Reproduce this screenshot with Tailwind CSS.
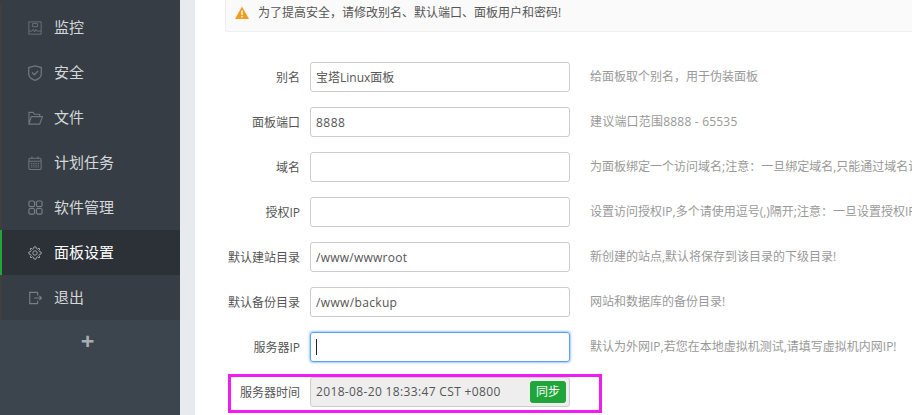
<!DOCTYPE html>
<html lang="zh-CN">

<head>
    <meta charset="UTF-8">
    <script src="https://cdn.jsdelivr.net/npm/@tailwindcss/browser@4"></script>
    <title>面板设置</title>
</head>

<body class="relative h-[415px] w-[912px] overflow-hidden bg-white font-['Open_Sans','Noto_Sans_CJK_SC',sans-serif] text-xs text-[#555]">
    <div class="flex h-[415px]">
        <!-- sidebar -->
        <aside class="w-[180px] shrink-0 bg-[#3c444d]">
            <ul class="bg-[#363d44] pt-[5px] text-[15px] text-[#d5d8da]">
                <li class="flex h-[45px] items-center border-l-2 border-[#3f3f3f] pl-[26px]">
                    <svg class="mr-[12px] h-[14px] w-[14px]" viewBox="0 0 16 16" fill="none" stroke="#70767c">
                        <rect x="1" y="1" width="14" height="14" />
                        <path d="M1 11.500h3.500l1.500-2 1.500 3 1.500-3 1 2H15M5 3h6v3.500H5z" />
                    </svg>
                    <span class="pb-[2px]">监控</span>
                </li>
                <li class="flex h-[45px] items-center border-l-2 border-[#3f3f3f] pl-[26px]">
                    <svg class="mr-[12px] h-[16px] w-[14px]" viewBox="0 0 14 16" fill="none" stroke="#70767c" stroke-width="1.300">
                        <path d="M7 .8 13.300 2.500v6.500c0 3-3 5.200-6.300 6.300C3.700 14.200.7 12 .7 9V2.500z" />
                        <path d="m4 7.500 2.300 2.300L10 6" />
                    </svg>
                    <span class="pb-[2px]">安全</span>
                </li>
                <li class="flex h-[45px] items-center border-l-2 border-[#3f3f3f] pl-[26px]">
                    <svg class="mr-[11px] h-[14px] w-[15px]" viewBox="0 0 16 15" fill="none" stroke="#70767c" stroke-width="1.200">
                        <path d="M1 14V1.500h4.500L7 3.500h5.500v2.500M1 14h11.500L15.500 6H3.500z" />
                    </svg>
                    <span class="pb-[2px]">文件</span>
                </li>
                <li class="flex h-[45px] items-center border-l-2 border-[#3f3f3f] pl-[26px]">
                    <svg class="mr-[12px] h-[14px] w-[14px]" viewBox="0 0 16 16" fill="none" stroke="#70767c" stroke-width="1.200">
                        <rect x="1" y="2.500" width="14" height="13" rx="1.500" />
                        <path d="M1 6h14M4.500 .5v3M11.500 .5v3" />
                        <path d="M3.500 8.500h9M3.500 10.500h9M3.500 12.500h9" stroke-dasharray="1.500 1" />
                    </svg>
                    <span class="pb-[2px]">计划任务</span>
                </li>
                <li class="flex h-[45px] items-center border-l-2 border-[#3f3f3f] pl-[26px]">
                    <svg class="mr-[11px] h-[15px] w-[15px]" viewBox="0 0 16 16" fill="none" stroke="#7a8086" stroke-width="1.200">
                        <rect x="1" y="1" width="6" height="6" rx="1.500" />
                        <rect x="9" y="1" width="6" height="6" rx="1.500" />
                        <rect x="1" y="9" width="6" height="6" rx="1.500" />
                        <rect x="9" y="9" width="6" height="6" rx="1.500" />
                    </svg>
                    <span class="pb-[2px]">软件管理</span>
                </li>
                <li class="flex h-[45px] items-center border-l-2 border-[#20a53a] bg-[#2c3138] pl-[26px] text-white">
                    <svg class="mr-[12px] h-[14px] w-[14px]" viewBox="0 0 16 16" fill="none" stroke="#a0a4a8" stroke-width="1.100">
                        <polygon points="6.800,1 9.200,1 9.600,3 10.900,3.600 12.600,2.400 13.600,3.400 12.400,5.100 13,6.400 15,6.800 15,9.200 13,9.600 12.400,10.900 13.600,12.600 12.600,13.600 10.900,12.400 9.600,13 9.200,15 6.800,15 6.400,13 5.100,12.400 3.400,13.600 2.400,12.600 3.600,10.900 3,9.600 1,9.200 1,6.800 3,6.400 3.600,5.100 2.400,3.400 3.400,2.400 5.100,3.600 6.400,3" />
                        <circle cx="8" cy="8" r="2.500" />
                    </svg>
                    <span class="pb-[2px]">面板设置</span>
                </li>
                <li class="flex h-[45px] items-center border-l-2 border-[#3f3f3f] pl-[26px]">
                    <svg class="mr-[12px] h-[14px] w-[14px]" viewBox="0 0 16 16" fill="none" stroke="#7a8086" stroke-width="1.300">
                        <path d="M11 1.500H2v13h9M11 1.500V5M11 14.500V11M7 8h8.500M13 5.500 15.500 8 13 10.500" />
                    </svg>
                    <span class="pb-[2px]">退出</span>
                </li>
            </ul>
            <div class="flex h-[44px] items-center justify-center pr-[5px] pb-[2px] text-[24px] leading-none font-bold text-[#a8adb2]">+</div>
        </aside>
        <div class="w-[15px] shrink-0 bg-[#e7eaef]"></div>

        <!-- content -->
        <main class="min-w-0 flex-1 overflow-hidden whitespace-nowrap pl-[30px]">
            <div class="flex h-[32px] items-center rounded-bl-[3px] border-b border-l border-[#eeeeee] bg-[#fafafa] pb-[6px] pl-[9px]">
                <svg class="mr-[9px] h-[13px] w-[14px] shrink-0" viewBox="0 0 14 13">
                    <path d="M7 .5 14 13H0z" fill="#f39c1f" />
                    <path d="M6.300 4.500h1.400v4.500H6.300zM6.300 10h1.400v1.500H6.300z" fill="#fff" />
                </svg>
                <span>为了提高安全，请修改别名、默认端口、面板用户和密码!</span>
            </div>

            <form class="pt-[30px]">
                <div class="mb-[15px] flex h-[30px] items-center">
                    <label class="-ml-[25px] w-[100px] shrink-0 pt-[1px] text-right">别名</label>
                    <input type="text" value="宝塔Linux面板" class="ml-[10px] h-[30px] w-[260px] shrink-0 rounded-[3px] border border-[#ccc] px-[5px] text-[#555]">
                    <span class="ml-[20px] text-[#999]">给面板取个别名，用于伪装面板</span>
                </div>
                <div class="mb-[15px] flex h-[30px] items-center">
                    <label class="-ml-[25px] w-[100px] shrink-0 pt-[1px] text-right">面板端口</label>
                    <input type="text" value="8888" class="ml-[10px] h-[30px] w-[260px] shrink-0 rounded-[3px] border border-[#ccc] px-[5px] tracking-[0.5px] text-[#555]">
                    <span class="ml-[20px] tracking-[0.2px] text-[#999]">建议端口范围8888 - 65535</span>
                </div>
                <div class="mb-[15px] flex h-[30px] items-center">
                    <label class="-ml-[25px] w-[100px] shrink-0 pt-[1px] text-right">域名</label>
                    <input type="text" class="ml-[10px] h-[30px] w-[260px] shrink-0 rounded-[3px] border border-[#ccc] px-[5px] text-[#555]">
                    <span class="ml-[20px] text-[#999]">为面板绑定一个访问域名;注意：一旦绑定域名,只能通过域名访问面板!</span>
                </div>
                <div class="mb-[15px] flex h-[30px] items-center">
                    <label class="-ml-[25px] w-[100px] shrink-0 pt-[1px] text-right">授权IP</label>
                    <input type="text" class="ml-[10px] h-[30px] w-[260px] shrink-0 rounded-[3px] border border-[#ccc] px-[5px] text-[#555]">
                    <span class="ml-[20px] text-[#999]">设置访问授权IP,多个请使用逗号(,)隔开;注意：一旦设置授权IP,只有指定IP的电脑能访问面板!</span>
                </div>
                <div class="mb-[15px] flex h-[30px] items-center">
                    <label class="-ml-[25px] w-[100px] shrink-0 pt-[1px] text-right">默认建站目录</label>
                    <input type="text" value="/www/wwwroot" class="ml-[10px] h-[30px] w-[260px] shrink-0 rounded-[3px] border border-[#ccc] px-[5px] tracking-[0.25px] text-[#555]">
                    <span class="ml-[20px] text-[#999]">新创建的站点,默认将保存到该目录的下级目录!</span>
                </div>
                <div class="mb-[15px] flex h-[30px] items-center">
                    <label class="-ml-[25px] w-[100px] shrink-0 pt-[1px] text-right">默认备份目录</label>
                    <input type="text" value="/www/backup" class="ml-[10px] h-[30px] w-[260px] shrink-0 rounded-[3px] border border-[#ccc] px-[5px] tracking-[0.35px] text-[#555]">
                    <span class="ml-[20px] text-[#999]">网站和数据库的备份目录!</span>
                </div>
                <div class="mb-[15px] flex h-[30px] items-center">
                    <label class="-ml-[25px] w-[100px] shrink-0 pt-[1px] text-right">服务器IP</label>
                    <div class="ml-[10px] flex h-[30px] w-[260px] shrink-0 items-center rounded-[3px] border border-[#5b9ef0] pl-[5px] shadow-[0_0_2px_1px_rgba(91,158,240,0.55)]">
                        <span class="h-[16px] w-px bg-[#222]"></span>
                    </div>
                    <span class="ml-[20px] text-[#999]">默认为外网IP,若您在本地虚拟机测试,请填写虚拟机内网IP!</span>
                </div>
                <div class="flex h-[30px] items-center">
                    <label class="-ml-[25px] w-[100px] shrink-0 pt-[1px] text-right">服务器时间</label>
                    <div class="ml-[10px] flex h-[30px] w-[260px] shrink-0 items-center justify-between rounded-[3px] border border-[#ccc] bg-[#eeeeee] pr-[3px] pl-[5px]">
                        <span class="tracking-[0.35px]">2018-08-20 18:33:47 CST +0800</span>
                        <button type="button" class="h-[22px] w-[36px] rounded-[3px] bg-[#20a53a] text-white">同步</button>
                    </div>
                </div>
            </form>
        </main>
    </div>

    <!-- annotation box drawn over the screenshot -->
    <div class="pointer-events-none absolute top-[374px] left-[228px] h-[39px] w-[374px] border-[3px] border-[#f31bf3]"></div>
</body>

</html>
